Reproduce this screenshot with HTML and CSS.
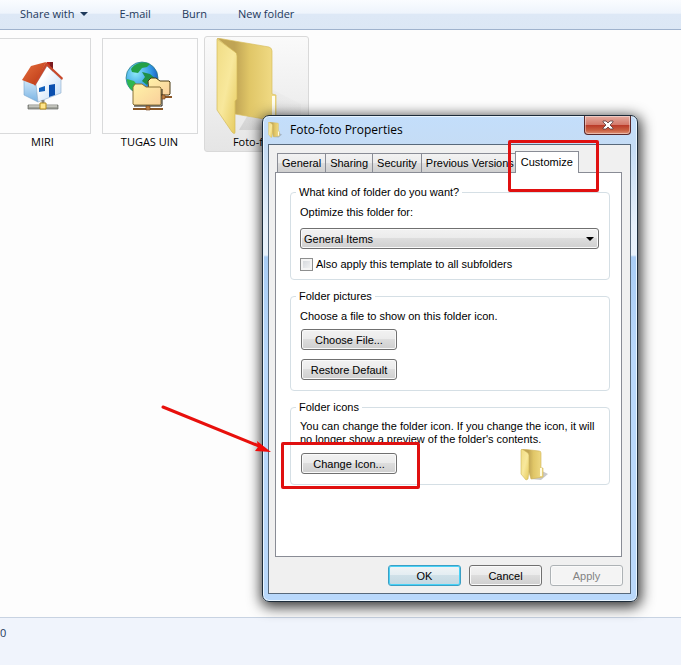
FILE: index.html
```
<!DOCTYPE html>
<html lang="en">
<head>
    <meta charset="utf-8">
    <title>Foto-foto Properties</title>
    <link rel="stylesheet" href="styles.css">
</head>
<body>
    <div class="explorer">
        <div class="toolbar">
            <button type="button">Share with <span class="caret"></span></button>
            <button type="button">E-mail</button>
            <button type="button">Burn</button>
            <button type="button">New folder</button>
        </div>

        <div class="files">
            <div class="file">
                <div class="thumb">
                    <svg width="44" height="52" viewBox="0 0 44 52">
                        <defs>
                            <linearGradient id="roof" x1="0" y1="0" x2="1" y2="1">
                                <stop offset="0" stop-color="#e8713f"/>
                                <stop offset="1" stop-color="#b83512"/>
                            </linearGradient>
                            <linearGradient id="wall" x1="0" y1="0" x2="1" y2="1">
                                <stop offset=".3" stop-color="#ffffff"/>
                                <stop offset="1" stop-color="#bcd9f6"/>
                            </linearGradient>
                            <linearGradient id="side" x1="0" y1="0" x2="0" y2="1">
                                <stop offset="0" stop-color="#d5ebfa"/>
                                <stop offset="1" stop-color="#79b3e4"/>
                            </linearGradient>
                        </defs>
                        <path d="M26 2h6v12l-6-6z" fill="#b8241a"/>
                        <path d="M29 2h3v12l-3-3z" fill="#7b1b20"/>
                        <path d="M3 19l12 5 2 18-14-7z" fill="url(#side)" stroke="#7ba6cc" stroke-width=".6"/>
                        <path d="M15 24L26 6l14 13v14l-23 9z" fill="url(#wall)" stroke="#8eacca" stroke-width=".6"/>
                        <path d="M1 20L10 6l15-4-11 23z" fill="url(#roof)"/>
                        <path d="M25 2l17 16-1 2L26 6 14 26l-1-2z" fill="#c8482a"/>
                        <path d="M18 28l6-2v5l-6 1z" fill="#1261bd"/>
                        <path d="M28 25l6-1v11l-6 2z" fill="#0a4fae"/>
                        <path d="M22 40v5" stroke="#888" stroke-width="3"/>
                        <path d="M7 45h30v4H7z" fill="#a0a29b" stroke="#62645e" stroke-width=".7"/>
                        <path d="M8 46h28" stroke="#e6e6df"/>
                        <path d="M19 43h6v6h-6z" fill="#ffe58a" stroke="#b38b1d"/>
                    </svg>
                </div>
                <span>MIRI</span>
            </div>
            <div class="file">
                <div class="thumb">
                    <svg width="50" height="50" viewBox="0 0 50 50">
                        <defs>
                            <radialGradient id="sea" cx=".3" cy=".35" r=".8">
                                <stop offset="0" stop-color="#8de6f7"/>
                                <stop offset=".6" stop-color="#329be5"/>
                                <stop offset="1" stop-color="#1644b4"/>
                            </radialGradient>
                            <linearGradient id="paper" x1="0" y1="0" x2="1" y2="1">
                                <stop offset="0" stop-color="#fff3a8"/>
                                <stop offset="1" stop-color="#f9cf9b"/>
                            </linearGradient>
                        </defs>
                        <circle cx="17" cy="17" r="16" fill="url(#sea)" stroke="#237a80" stroke-width=".7"/>
                        <path d="M6 8c4-6 12-8 19-5l-3 3-5 1-4 5-6-1z" fill="#23a047"/>
                        <path d="M2 18l7 2 4 5-3 6C5 29 2 24 2 19z" fill="#2fb64f"/>
                        <path d="M17 11l8 2 6 5-6 1-3 5-5-4 3-4z" fill="#1f8f46"/>
                        <path d="M23 20l3-3h5l4 3h9l1 1v12l-1 1H24z" fill="url(#paper)" stroke="#4a3b12"/>
                        <path d="M8 26l2-3h7l4 3h14l1 1v16l-1 1H9l-1-1z" fill="url(#paper)" stroke="#8a7338"/>
                        <path d="M9 45h28V28" fill="none" stroke="#1d170a"/>
                        <path d="M38 36h9M8 48h30" stroke="#8a5728" stroke-width="2"/>
                        <path d="M21 45h4v4h-4zM37 34h3v4h-3z" fill="#c08043" stroke="#6b3e18" stroke-width=".6"/>
                    </svg>
                </div>
                <span>TUGAS UIN</span>
            </div>
            <div class="file selected">
                <div class="thumb plain">
                    <svg width="96" height="96" viewBox="0 0 96 96">
                        <defs>
                            <linearGradient id="flap" x1="0" y1="0" x2="1" y2="1">
                                <stop offset="0" stop-color="#f0dc85"/>
                                <stop offset=".5" stop-color="#f8e89c"/>
                                <stop offset="1" stop-color="#e5c95b"/>
                            </linearGradient>
                            <linearGradient id="back" x1="0" y1="0" x2="1" y2="0">
                                <stop offset=".3" stop-color="#c0a454"/>
                                <stop offset=".55" stop-color="#e0c667"/>
                                <stop offset="1" stop-color="#f2dd88"/>
                            </linearGradient>
                            <linearGradient id="shade" x1="0" y1="1" x2="1" y2="0">
                                <stop offset="0" stop-color="#999" stop-opacity=".3"/>
                                <stop offset="1" stop-color="#ccc" stop-opacity="0"/>
                            </linearGradient>
                        </defs>
                        <path d="M56 48l36 18v26H30z" fill="url(#shade)"/>
                        <path d="M8 0l52 9q3 1 3 4v43l4 1v26L26 76V15z" fill="url(#back)" stroke="#d9bf60" stroke-width=".7"/>
                        <path d="M63 58h3v22h-3z" fill="#fffef0"/>
                        <path d="M8 1l18 13q2 1 2 4v43l-2 2v31q0 3-3 0L8 72z" fill="url(#flap)" stroke="#d4ba59" stroke-width=".7"/>
                    </svg>
                </div>
                <span>Foto-foto</span>
            </div>
        </div>

        <div class="statusbar">0</div>
    </div>

    <div class="dialog">
        <div class="titlebar">
            <svg width="16" height="16" viewBox="0 0 32 32">
                <use href="#small-folder"/>
            </svg>
            <span class="title">Foto-foto Properties</span>
            <button type="button" class="close" aria-label="Close">
                <svg width="12" height="10" viewBox="0 0 12 10">
                    <path d="M1 1h3l2 2 2-2h3v1L8 5l3 3v1H8L6 7 4 9H1V8l3-3-3-3z" fill="#fff" stroke="#5b3a3a" stroke-width=".8"/>
                </svg>
            </button>
        </div>

        <div class="client">
            <div class="tabs">
                <button type="button">General</button>
                <button type="button">Sharing</button>
                <button type="button">Security</button>
                <button type="button" class="wide">Previous Versions</button>
                <button type="button" class="active">Customize</button>
            </div>

            <div class="panel">
                <fieldset>
                    <legend>What kind of folder do you want?</legend>
                    <label for="kind">Optimize this folder for:</label>
                    <div class="dropdown">
                        <select id="kind">
                            <option>General Items</option>
                        </select>
                        <span class="caret"></span>
                    </div>
                    <div class="check">
                        <input type="checkbox" id="subfolders">
                        <label for="subfolders">Also apply this template to all subfolders</label>
                    </div>
                </fieldset>

                <fieldset>
                    <legend>Folder pictures</legend>
                    <p>Choose a file to show on this folder icon.</p>
                    <div class="stack">
                        <button type="button" class="btn">Choose File...</button>
                        <button type="button" class="btn">Restore Default</button>
                    </div>
                </fieldset>

                <fieldset>
                    <legend>Folder icons</legend>
                    <p class="tight">You can change the folder icon. If you change the icon, it will<br>no longer show a preview of the folder's contents.</p>
                    <div class="icon-row">
                        <button type="button" class="btn">Change Icon...</button>
                        <svg width="32" height="32" viewBox="0 0 32 32">
                            <g id="small-folder">
                                <path d="M18 20l10 5-7 6-10-1z" fill="#777" opacity=".4"/>
                                <path d="M2 0l17 2q2 0 2 2v15h2v9l-12 2z" fill="url(#back)" stroke="#d0b455" stroke-width=".6"/>
                                <path d="M20 19h2v8h-2z" fill="#fffbe0"/>
                                <path d="M2 0l6 4 1 2v15l-1 9-2 1-5-6V1z" fill="url(#flap)" stroke="#cfb557" stroke-width=".6"/>
                            </g>
                        </svg>
                    </div>
                </fieldset>
            </div>

            <div class="actions">
                <button type="button" class="btn default">OK</button>
                <button type="button" class="btn">Cancel</button>
                <button type="button" class="btn" disabled>Apply</button>
            </div>
        </div>
    </div>

    <!-- red marks over the window -->
    <div class="mark mark-tab"></div>
    <div class="mark mark-button"></div>
    <svg class="arrow" width="110" height="50" viewBox="0 0 110 50">
        <path d="M2 3L98 42" stroke="#e8100c" stroke-width="3" stroke-linecap="round"/>
        <path d="M110 48L94 47l3-4-1-6z" fill="#f00a08"/>
    </svg>
</body>
</html>
```
FILE: styles.css
```
* {
    box-sizing: border-box;
}
body {
    margin: 0;
    min-height: 100vh;
    position: relative;
    overflow: hidden;
    font-family: "Open Sans", sans-serif;
    font-size: 11px;
    color: #000;
}
button, select, input {
    font: inherit;
    color: inherit;
    margin: 0;
}
p {
    margin: 0;
}
svg {
    display: block;
}
.caret {
    display: inline-block;
    border: 4px solid transparent;
    border-top-color: currentColor;
    border-bottom: 0;
}

/* explorer window */
.explorer {
    display: flex;
    flex-direction: column;
    height: 100vh;
    background: #fdfdfd;
}
.toolbar {
    display: flex;
    gap: 31px;
    height: 30px;
    padding: 0 20px 2px;
    background: linear-gradient(#fafcff, #eef4fc 45%, #dde8f6 50%, #dce7f5);
    border-bottom: 1px solid #9fb2cd;
    color: #1e395b;
}
.toolbar button {
    display: flex;
    align-items: center;
    gap: 6px;
    padding: 0;
    border: 0;
    background: none;
}
.files {
    flex: 1;
    display: flex;
    align-items: flex-start;
    gap: 2px;
    margin-left: -10px;
    padding-top: 6px;
}
.file {
    display: flex;
    flex-direction: column;
    align-items: center;
    flex: 0 0 105px;
    height: 116px;
    padding-top: 1px;
    border: 1px solid transparent;
    border-radius: 3px;
    line-height: 16px;
}
.file.selected {
    border-color: #d9d9d9;
    background: linear-gradient(#fafafa, #e5e5e5);
}
.thumb {
    display: flex;
    align-items: center;
    justify-content: center;
    width: 96px;
    height: 96px;
    border: 1px solid #d9dadb;
}
.thumb.plain {
    border: 0;
}
.statusbar {
    height: 48px;
    padding-top: 7px;
    border-top: 1px solid #c8d3e2;
    background: #f0f4fc;
    color: #1e395b;
    line-height: 16px;
}

/* properties dialog */
.dialog {
    position: absolute;
    top: 115px;
    left: 262px;
    right: 43px;
    padding: 0 6px 7px 5px;
    border: 1px solid #1d2c3a;
    border-radius: 7px;
    background: linear-gradient(#c3defb, #c5dcf5 30px, #e6f0fa 110px, #e9f2fb 139px, #a9cdf5 141px, #b9d8fb 240px, #b9d8fb);
    box-shadow: inset 0 0 0 1px #e9f5ff, 1px 3px 14px 2px rgba(0, 0, 0, 0.8);
    font-family: "Liberation Sans", Arial, sans-serif;
    line-height: 14px;
}
.titlebar {
    display: flex;
    gap: 6px;
    height: 28px;
    padding-top: 6px;
    font-family: "Open Sans", sans-serif;
    font-size: 12px;
    line-height: 16px;
}
.title {
    flex: 1;
}
.close {
    display: flex;
    align-items: center;
    justify-content: center;
    width: 47px;
    height: 19px;
    margin-top: -6px;
    padding: 0;
    border: 1px solid #59282a;
    border-top: 0;
    border-radius: 0 0 4px 4px;
    background: linear-gradient(#e5aa9e, #d47a6b 48%, #b93827 50%, #ca6142 80%, #df9278);
    box-shadow: inset 0 0 0 1px rgba(255, 255, 255, 0.4);
}
.client {
    padding: 6px 8px 7px 6px;
    border: 1px solid #58697b;
    background: #f0f0f0;
}
.tabs {
    display: flex;
    align-items: flex-end;
    padding-left: 2px;
}
.tabs button {
    height: 19px;
    padding: 0 4px;
    border: 1px solid #898c95;
    border-bottom: 0;
    border-right: 0;
    background: linear-gradient(#f2f2f2, #ebebeb 50%, #dddddd 52%, #cfcfcf);
    white-space: nowrap;
    line-height: 14px;
}
.tabs .wide {
    width: 94px;
}
.tabs .active {
    position: relative;
    height: 22px;
    margin-bottom: -1px;
    padding: 0 5px 2px;
    border-right: 1px solid #898c95;
    background: #fff;
}
.panel {
    min-height: 385px;
    padding: 12px 11px 0 14px;
    border: 1px solid #898c95;
    background: #fff;
}
fieldset {
    min-width: 0;
    margin: 0 0 9px;
    padding: 6px 10px 8px 9px;
    border: 1px solid #d5dfe5;
    border-radius: 4px;
}
legend {
    margin-left: -4px;
    padding: 0 3px;
}
fieldset > label {
    display: block;
}
.dropdown {
    position: relative;
    margin: 9px 0 8px;
}
.dropdown select {
    display: block;
    appearance: none;
    width: 100%;
    height: 21px;
    padding: 0 3px;
    border: 1px solid #707070;
    border-radius: 3px;
    background: linear-gradient(#f2f2f2, #ebebeb 48%, #dddddd 50%, #cfcfcf);
    box-shadow: inset 0 0 0 1px #fafafa;
}
.dropdown .caret {
    position: absolute;
    top: 9px;
    right: 5px;
    pointer-events: none;
}
.check {
    display: flex;
    align-items: center;
    gap: 3px;
}
.check input {
    appearance: none;
    width: 13px;
    height: 13px;
    border: 1px solid #8e8f8f;
    background: linear-gradient(135deg, #cfd3d8, #f6f6f6);
    box-shadow: inset 0 0 0 2px #f4f4f4;
}
.btn {
    width: 96px;
    height: 21px;
    padding: 0;
    border: 1px solid #707070;
    border-radius: 3px;
    background: linear-gradient(#f2f2f2, #ebebeb 48%, #dddddd 50%, #cfcfcf);
    box-shadow: inset 0 0 0 1px #fafafa;
}
.btn.default {
    border-color: #3c9fc4;
    background: linear-gradient(#f0f4f6, #e3edf2 48%, #cfe0e8 50%, #c3d8e2);
    box-shadow: inset 0 0 0 1px #48d2f7;
}
.btn:disabled {
    border-color: #adb2b5;
    background: #f4f4f4;
    color: #838383;
}
.stack {
    display: flex;
    flex-direction: column;
    gap: 9px;
    padding: 6px 1px 2px;
}
.tight {
    line-height: 13px;
}
.icon-row {
    display: flex;
    align-items: flex-start;
    justify-content: space-between;
    height: 30px;
    padding: 3px 47px 0 1px;
}
.icon-row .btn {
    margin-top: 4px;
}
.actions {
    display: flex;
    justify-content: flex-end;
    gap: 8px;
    margin: 8px -1px 0 0;
}
.actions .btn {
    width: 73px;
}

/* red marks */
.mark {
    position: absolute;
    border: 3px solid #e01010;
    border-radius: 2px;
}
.mark-tab {
    top: 140px;
    left: 508px;
    width: 91px;
    height: 52px;
}
.mark-button {
    top: 442px;
    left: 281px;
    width: 139px;
    height: 47px;
}
.arrow {
    position: absolute;
    top: 404px;
    left: 161px;
}
```
